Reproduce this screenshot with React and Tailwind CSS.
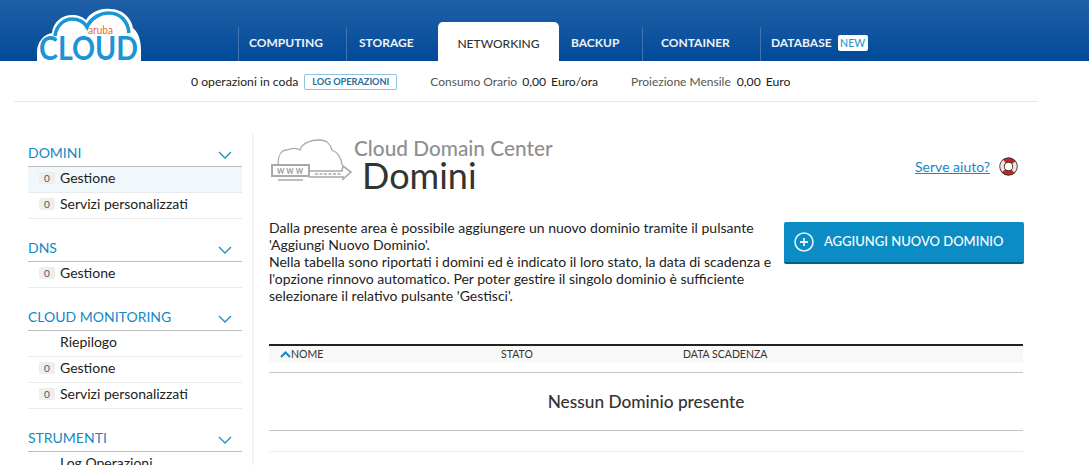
const sidebar = [
  {
    title: 'DOMINI',
    items: [
      { label: 'Gestione', count: 0, active: true },
      { label: 'Servizi personalizzati', count: 0 },
    ],
  },
  { title: 'DNS', items: [{ label: 'Gestione', count: 0 }] },
  {
    title: 'CLOUD MONITORING',
    items: [
      { label: 'Riepilogo' },
      { label: 'Gestione', count: 0 },
      { label: 'Servizi personalizzati', count: 0 },
    ],
  },
  { title: 'STRUMENTI', items: [{ label: 'Log Operazioni' }] },
];

const Logo = () => (
  <svg width="150" height="61" viewBox="0 0 150 61" className="shrink-0">
    <path
      d="M37 52C37 42 44 34 52 33C53 22 62 15 72 15C78 15 83 17 86 20C91 12 100 8 110 9C122 9 131 17 133 28C138 32 141 40 141 50L141 61L37 61Z"
      fill="#fff"
    />
    <path
      d="M55 36C56 27 63 19 72 19C79 19 84 22 87 27C91 18 100 13 109 13C120 13 128 21 129 33"
      fill="none"
      stroke="#1b95d6"
      strokeWidth="3.6"
    />
    <text x="88" y="34" fontSize="11" fill="#f0652c" fontFamily="Lato, sans-serif" textLength="25" lengthAdjust="spacingAndGlyphs">aruba</text>
    <text
      x="39"
      y="60"
      fontSize="33"
      fontWeight="700"
      fill="#1b95d6"
      fontFamily="Lato, sans-serif"
      textLength="99"
      lengthAdjust="spacingAndGlyphs"
    >CLOUD</text>
  </svg>
);

const Chevron = () => (
  <svg width="14" height="8" viewBox="0 0 14 8" fill="none" stroke="#1b8fc6" strokeWidth="1.3" className="mr-[10px] mt-[8px]">
    <path d="M1 1l6 6 6-6" />
  </svg>
);

const WwwIcon = () => (
  <svg width="84" height="50" viewBox="0 0 84 50" fill="none" stroke="#a9a9a9" className="shrink-0">
    <path d="M9 30C9 22 12 16 18 16C23 14 28 14 31 16C33 9 42 6 50 6C58 6 62 11 63 16C68 18 73 24 73 31" strokeWidth="1.3" />
    <rect x="3" y="31" width="37" height="11" strokeWidth="2" />
    <text x="8" y="40" fontSize="7" fontWeight="700" fill="#999" stroke="none" letterSpacing="2" fontFamily="Lato, sans-serif">WWW</text>
    <path d="M40 37H73L74 32L82 38L74 45V43H40" strokeWidth="1.6" />
    <path d="M46 40H72" strokeWidth="1.4" strokeDasharray="3 1.5" />
    <path d="M9 46H34" strokeWidth="1.5" />
  </svg>
);

const Lifebuoy = () => (
  <svg width="19" height="19" viewBox="0 0 19 19" className="ml-[9px]">
    <circle cx="9.5" cy="9.5" r="6.5" fill="none" stroke="#333" strokeWidth="5.4" />
    <circle cx="9.5" cy="9.5" r="6.5" fill="none" stroke="#c9241e" strokeWidth="3.6" />
    <circle cx="9.5" cy="9.5" r="6.5" fill="none" stroke="#e6e6e6" strokeWidth="3.6" strokeDasharray="10.2 10.2" strokeDashoffset="5.1" />
  </svg>
);

const App = () => {
  return (
    <div className="h-[465px] overflow-hidden bg-white text-[#222] font-['Lato','Liberation_Sans',sans-serif]">
      <header className="h-[61px] bg-gradient-to-b from-[#1f60a6] to-[#004a99] flex overflow-hidden">
        <div className="w-[238px] shrink-0">
          <Logo />
        </div>
        <nav className="flex items-end text-[12px] font-bold text-[#eef3f9]">
          <div className="h-[34px] leading-[32px] w-[108px] pl-[10px] border-l border-[#3f74b0]">COMPUTING</div>
          <div className="h-[34px] leading-[32px] w-[92px] pl-[12px] border-l border-[#3f74b0]">STORAGE</div>
          <div className="h-[39px] w-[121px] bg-white rounded-t-[5px] text-[#333] font-medium text-center leading-[44px]">NETWORKING</div>
          <div className="h-[34px] leading-[32px] w-[83px] pl-[12px]">BACKUP</div>
          <div className="h-[34px] leading-[32px] w-[118px] pl-[18px] border-l border-[#3f74b0]">CONTAINER</div>
          <div className="h-[34px] leading-[32px] pl-[10px] border-l border-[#3f74b0] flex items-start">
            DATABASE
            <span className="ml-[6px] mt-[8px] w-[30px] h-[16px] bg-white rounded-[2px] text-[#2a93c9] text-[10.5px] font-medium leading-[16px] text-center">NEW</span>
          </div>
        </nav>
      </header>

      <div className="ml-[14px] w-[1024px] h-[41px] border-b border-[#e8e8e8] flex items-center pl-[177px] text-[12.2px] pt-[2px]">
        <span>0 operazioni in coda</span>
        <span className="ml-[6px] h-[16px] w-[93px] border border-[#8fc4e0] rounded-[2px] text-[#1f6f9e] text-[9.2px] font-bold text-center leading-[14px]">LOG OPERAZIONI</span>
        <span className="ml-[33px] text-[12px] text-[#555]">Consumo Orario</span>
        <span className="ml-[5px]">0,00</span>
        <span className="ml-[5px]">Euro/ora</span>
        <span className="ml-[33px] text-[12px] text-[#555]">Proiezione Mensile</span>
        <span className="ml-[6px]">0,00</span>
        <span className="ml-[5px]">Euro</span>
      </div>

      <div className="flex mt-[32px]">
        <aside className="ml-[28px] w-[226px] pr-[10px] border-r-2 border-[#f3f3f3] h-[340px] overflow-hidden">
          {sidebar.map((s) => (
            <div key={s.title} className="mb-[10px]">
              <div className="h-[33px] pt-[9px] border-b border-[#bdbdbd] flex justify-between items-start text-[#1488c4] text-[14px] leading-[20px]">
                <span>{s.title}</span>
                <Chevron />
              </div>
              {s.items.map((it) => (
                <div
                  key={it.label}
                  className={`h-[26px] border-b border-[#eaeaea] flex items-center pl-[11px] pb-[4px] text-[14px] ${it.active ? 'bg-[#f0f8fc]' : ''}`}
                >
                  {it.count !== undefined ? (
                    <span className="w-[16px] h-[12px] bg-[#eeeeee] rounded-[2px] text-[10px] leading-[12px] text-center text-[#555] mr-[5px]">{it.count}</span>
                  ) : (
                    <span className="w-[21px]" />
                  )}
                  <span>{it.label}</span>
                </div>
              ))}
            </div>
          ))}
        </aside>

        <main className="ml-[15px] w-[755px]">
          <div className="flex h-[68px]">
            <WwwIcon />
            <div className="ml-[1px] mt-[2px]">
              <div className="text-[20.8px] leading-[24px] font-medium text-[#8f8f8f]">Cloud Domain Center</div>
              <div className="ml-[8px] text-[36px] leading-[34px] text-[#333] mt-[-2px]">Domini</div>
            </div>
            <div className="ml-auto mr-[6px] mt-[23px] flex items-start h-[20px]">
              <a className="text-[14px] leading-[20px] text-[#1488c4] underline">Serve aiuto?</a>
              <Lifebuoy />
            </div>
          </div>

          <div className="flex mt-[17px] h-[123px]">
            <p className="w-[505px] text-[14px] leading-[17px] text-[#222]">
              Dalla presente area è possibile aggiungere un nuovo dominio tramite il pulsante 'Aggiungi Nuovo Dominio'.
              <br />
              Nella tabella sono riportati i domini ed è indicato il loro stato, la data di scadenza e l'opzione rinnovo automatico. Per poter gestire il singolo dominio è sufficiente selezionare il relativo pulsante 'Gestisci'.
            </p>
            <button className="ml-[10px] mt-[3px] w-[240px] h-[42px] bg-[#0c8cc4] border-b-2 border-[#0a5f88] rounded-[2px] flex items-center pl-[10px] text-white text-[13px] font-medium">
              <svg width="20" height="20" viewBox="0 0 20 20" fill="none" stroke="#e4f2f9" strokeWidth="1.6" className="mr-[10px]">
                <circle cx="10" cy="10" r="9" />
                <path d="M10 6v8M6 10h8" strokeWidth="1.8" />
              </svg>
              AGGIUNGI NUOVO DOMINIO
            </button>
          </div>

          <div className="mr-[1px] border-t-2 border-[#222] bg-[#f8f8f6] h-[19px] mt-[2px] flex items-center text-[10.5px] text-[#333]">
            <div className="w-[232px] pl-[11px] flex items-center">
              <svg width="11" height="7" viewBox="0 0 11 7" fill="none" stroke="#1488c4" strokeWidth="2">
                <path d="M1 6l4.5-4.5L10 6" />
              </svg>
              NOME
            </div>
            <div className="w-[182px]">STATO</div>
            <div>DATA SCADENZA</div>
          </div>
          <div className="mr-[1px] mt-[9px] h-[59px] border-y border-[#c4c4c4] flex items-center justify-center text-[17.3px] font-medium text-[#333]">
            Nessun Dominio presente
          </div>
          <div className="mr-[1px] h-[21px] border-b border-[#ececec]" />
        </main>
      </div>
    </div>
  );
};

export default App;
